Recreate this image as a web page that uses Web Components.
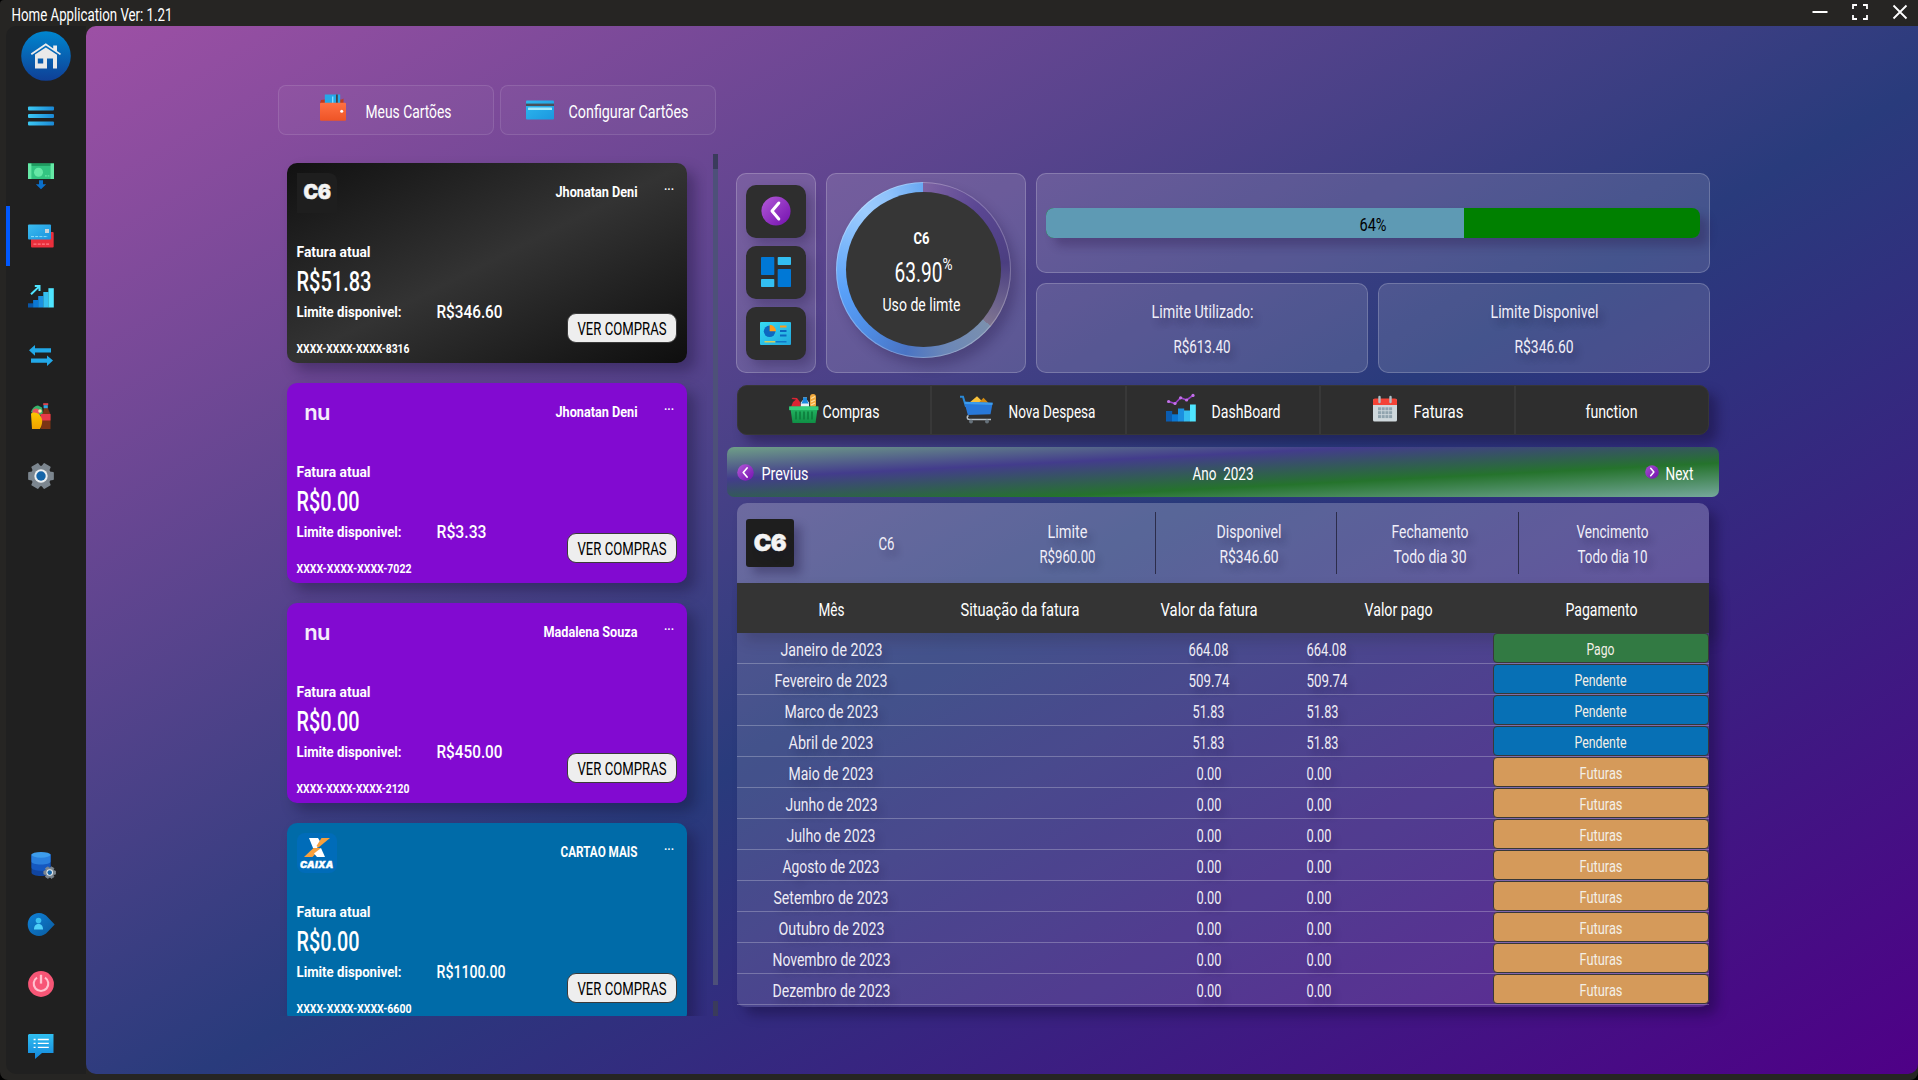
<!DOCTYPE html>
<html lang="pt-BR">
<head>
<meta charset="utf-8">
<title>Home Application</title>
<style>
html,body{margin:0;height:100%;background:#000;overflow:hidden}
body{font-family:Roboto,"Liberation Sans",sans-serif;color:#fff}
</style>
</head>
<body>
<home-app></home-app>
<script>
const make=(name,html,after)=>{
  customElements.define(name,class extends HTMLElement{
    constructor(){super();this.attachShadow({mode:'open'});}
    connectedCallback(){
      if(this.shadowRoot.childNodes.length)return;
      const t=document.createElement('template');
      t.innerHTML=typeof html==='function'?html(this):html;
      this.shadowRoot.append(t.content.cloneNode(true));
      if(after)after(this);
    }
  });
};
const a=(el,n,d='')=>el.getAttribute(n)??d;

const lg=(id,c1,c2,x2=0,y2=1)=>`<linearGradient id="${id}" x1="0" y1="0" x2="${x2}" y2="${y2}"><stop stop-color="${c1}"/><stop offset="1" stop-color="${c2}"/></linearGradient>`;
const gear=(cx,cy,r)=>{
  const p=[];
  for(let i=0;i<6;i++){
    const b=i*60;
    for(const [d,k] of [[-15,1],[15,1],[22,.77],[38,.77]]){
      const t=(b+d)*Math.PI/180;p.push((cx+Math.cos(t)*r*k).toFixed(2)+','+(cy+Math.sin(t)*r*k).toFixed(2));
    }
  }
  return `<polygon points="${p.join(' ')}" fill="#7c868f" stroke="#7c868f" stroke-width="${r*.14}" stroke-linejoin="round"/><circle cx="${cx}" cy="${cy}" r="${r*.54}" fill="#eceff1"/><circle cx="${cx}" cy="${cy}" r="${r*.38}" fill="#1565a8"/>`;
};
const icons={
home:[50,50,`<defs>${lg('g','#0086cf','#0f3f96')}</defs><circle cx="25" cy="25" r="24.8" fill="url(#g)"/><path d="M9.8 22.6 L24.8 12.2 L32.2 17.4 V14.6 H36 V20 L40 22.8 L39 24 L24.8 14.6 L10.8 24 Z" fill="#ececec"/><path fill-rule="evenodd" d="M14 23.6 L24.8 16.4 L36 23.8 V37.4 H32 V27.6 H26 V37.4 H14 Z M16.8 27.4 V32.6 H22.2 V27.4 Z" fill="#e9e9e9"/>`],
menu:[26,26,`<defs>${lg('g','#3cc9f4','#1a88d6',1,0)}</defs><g fill="url(#g)"><rect y="3.5" width="26" height="4" rx="1"/><rect y="11" width="26" height="4" rx="1"/><rect y="18.6" width="26" height="4" rx="1"/></g>`],
money:[26,26,`<rect y=".5" width="26" height="15.5" fill="#33c481"/><rect y=".5" width="26" height="2.4" fill="#1f9a5f"/><rect y=".5" width="3.4" height="15.5" fill="#66e8a6"/><rect x="22.6" y=".5" width="3.4" height="15.5" fill="#66e8a6"/><circle cx="10.5" cy="9.2" r="4.5" fill="#66e8a6"/><path d="M17 12.8h4.5" stroke="#66e8a6" stroke-width="1.2" stroke-dasharray="1.8 .8"/><path d="M11 17.2h4v4h3.2L13 26.2 7.8 21.2H11z" fill="#0a6fca"/>`],
cards:[26,26,`<defs>${lg('g','#3bbcf0','#1a93de',1,1)}</defs><rect x="3" y="9" width="22.7" height="15.6" rx="1" fill="#e92f3c"/><path d="M5.5 21.2h16.5" stroke="#ff7d85" stroke-width="1.2" stroke-dasharray="3 1.2"/><rect y="1.5" width="23" height="15" rx="1" fill="url(#g)"/><rect x="17" y="6" width="4" height="4" fill="#c8d3da"/><path d="M3 13.6h17" stroke="#8adcf9" stroke-width="1" stroke-dasharray="3 1.2"/>`],
growth:[26,26,`<g><rect y="20.3" width="5.2" height="4.2" fill="#0a56a6"/><rect x="5.1" y="17" width="5.2" height="7.5" fill="#0b78d4"/><rect x="10.2" y="13" width="5.2" height="11.5" fill="#1b90e0"/><rect x="15.3" y="9" width="5.2" height="15.5" fill="#35bff0"/><rect x="20.4" y="5.2" width="5.4" height="19.3" fill="#4fe5ff"/></g><path d="M3 11.2l8-7.6M6.8 2.9h4.7v5" fill="none" stroke="#4fe5ff" stroke-width="2"/>`],
swap:[26,26,`<g fill="#22a8e8"><path d="M1 7.3L7 2v3.2h16v4.4H7v3.2z"/><path d="M25 17.6l-6-5.2v3H3v4.4h16v3.2z"/></g>`],
food:[26,26,`<defs>${lg('g','#fcc800','#f0a000')}</defs><path d="M3 9c1-3 3-6 7-6.500l4 2 1 6-5 3z" fill="#35b36b"/><circle cx="8" cy="9" r="3.600" fill="#e8555f"/><circle cx="12" cy="8" r="1.800" fill="#f7e6b0"/><path d="M16 5l-.8 4c-1 2-1.700 4-1.700 6L13 26h9.500V12c0-2-2-4-2.500-7z" fill="#7b3415"/><rect x="15.200" y=".2" width="5" height="2" fill="#e0444f"/><rect x="15.600" y="2.200" width="4.200" height="3" fill="#35a7e0"/><path d="M12.500 11h10v6.500h-10z" fill="#e8394a"/><path d="M3 11c0-1 2-1.500 3-1.500 5 0 8.500 5 8.200 9-.2 3-1.200 5.500-2.200 7.500H4z" fill="url(#g)"/>`],
gear:[26,26,gear(13,13,12.4)],
db:[26,26,`<path d="M3.500 3.500v18c0 2 4 3.500 9.500 3.500s9.500-1.500 9.500-3.500v-18z" fill="#1045a0"/><path d="M3.500 3.500v13c0 2 4 3.200 9.500 3.200s9.500-1.200 9.500-3.200v-13z" fill="#1558c0"/><path d="M3.500 3.500v7c0 2 4 3 9.500 3s9.500-1 9.500-3v-7z" fill="#2a7fdd"/><ellipse cx="13" cy="3.800" rx="9.500" ry="2.900" fill="#3e9dec"/>${gear(21.700,21.600,6)}`],
tag:[26,26,`<defs>${lg('g','#0f82d8','#0a5a9e',1,1)}</defs><path d="M11 2C4.500 2-.3 7-.3 13.500S4.500 25 11 25c3.500 0 6.500-1.600 9-4.500l6.700-7-6.700-7C17.500 3.600 14.500 2 11 2z" fill="url(#g)"/><circle cx="10.500" cy="9.600" r="2.800" fill="#3cc0f0"/><path d="M6 18.500c0-4 2-5.500 4.500-5.500s4.500 1.500 4.500 5.500z" fill="#4fd0f8"/>`],
power:[26,26,`<circle cx="13" cy="13" r="12.900" fill="#f75676"/><path d="M9 6.600a7.300 7.300 0 1 0 8 0" fill="none" stroke="#ffc2cf" stroke-width="2.100"/><path d="M13 3.800v8.800" stroke="#ffc2cf" stroke-width="2.300"/>`],
chat:[26,26,`<defs>${lg('g','#30bff0','#1386dc')}</defs><path d="M1 3h24.500v19H14l-7 6v-6H0V4z" fill="url(#g)"/><path d="M9.800 8.500h11M9.800 12.400h11M9.800 16.300h11M5.600 8.500h2M5.600 12.400h2M5.600 16.300h2" stroke="#fff" stroke-width="1.300"/>`],
wallet:[26,27,`<defs>${lg('g','#ff7043','#ee5426')}</defs><path d="M1 6l4-.5h17l1.500-1v5H0z" fill="#bf3a1f"/><rect x="4.800" y=".5" width="15.400" height="10" fill="#26a8e8"/><rect x="12" y="2.500" width="1.400" height="8" fill="#7fdcff"/><rect x="16" y=".5" width="1.800" height="10" fill="#444"/><rect y="8.800" width="26" height="18" rx="1" fill="url(#g)"/><circle cx="21.700" cy="17.200" r="1.500" fill="#fff"/>`],
card:[28,20,`<defs>${lg('g','#2fb8ef','#1b98df',1,1)}</defs><rect y=".5" width="28" height="19" rx="1" fill="url(#g)"/><rect y="3.600" width="28" height="2.400" fill="#48505a"/><rect x="2" y="7.600" width="24" height="2.400" rx=".6" fill="#a4e8fb"/>`],
back:[30,30,`<defs>${lg('g','#b35ad8','#7310ae',1,1)}</defs><circle cx="15" cy="15" r="14.600" fill="url(#g)"/><path d="M17.800 7L11 15l6.800 8" fill="none" stroke="#fff" stroke-width="3" stroke-linejoin="round" stroke-linecap="round"/>`],
next:[30,30,`<defs>${lg('g','#a44fd0','#7310ae',1,1)}</defs><circle cx="15" cy="15" r="14.600" fill="url(#g)"/><path d="M12.200 7l6.800 8-6.800 8" fill="none" stroke="#fff" stroke-width="3.200" stroke-linejoin="round" stroke-linecap="round"/>`],
blocks:[30,30,`<rect width="13.300" height="18" rx=".8" fill="#0078d6"/><rect x="16.700" width="13.300" height="8" rx=".8" fill="#33bff2"/><rect y="22" width="13.300" height="8" rx=".8" fill="#33bff2"/><rect x="16.700" y="12" width="13.300" height="18" rx=".8" fill="#0078d6"/>`],
report:[31,23,`<defs>${lg('g','#35dcf5','#22a6dc',1,1)}</defs><rect width="31" height="23" rx="1" fill="url(#g)"/><circle cx="9.600" cy="9.300" r="5.800" fill="#0c68c0"/><path d="M9.600 9.300V2.800a6.400 6.400 0 0 1 6.400 6.500z" fill="#ff9c1a"/><path d="M20 4.500h6.500" stroke="#ff9c1a" stroke-width="2"/><path d="M20 9h6.500M20 13.500h6.500" stroke="#0c68c0" stroke-width="2"/><path d="M4.500 19.800h11" stroke="#ffd23a" stroke-width="1.200"/><path d="M15.500 19.800h11" stroke="#0c68c0" stroke-width="1.200"/>`],
basket:[30,30,`<defs>${lg('g','#26b866','#0f8f45')}</defs><path d="M2 13l2-5 3-2.500L2.500 5l1-1.200L8 4l3 4 .8 5z" fill="#dc2433"/><path d="M11.800 13V8.500L14 6V3.500h4V6l2 2.500V13z" fill="#e9f1f7"/><path d="M12.300 9.500L14 6V3.500h4V6l1.700 3.500z" fill="#1c8ae0"/><rect x="21" y="0" width="6" height="14" rx="3" fill="#f2a93c"/><path d="M22 4.500l4-2M22 8l4-2M22 11l4-2" stroke="#ffe0a0" stroke-width="1.300"/><path d="M.3 12.500h29v3.800h-1L26.500 29h-23L1.700 16.300H.3z" fill="url(#g)"/><rect x=".3" y="12.500" width="29" height="3.500" fill="#35cf7b"/><path d="M7 17.500v8M11 17.500v8M15 17.500v8M19 17.500v8M23 17.500v8" stroke="#0b7a3a" stroke-width="1.500"/>`],
cart:[33,29,`<path d="M9 8l8-6.800 7 6.800z" fill="#f9c13a"/><path d="M18.500 8l5-5.300 5 5.300z" fill="#d28a10"/><path d="M0 1.800h3l3 10" fill="none" stroke="#2a8ad8" stroke-width="2"/><path d="M4.300 6.700l28.400 1-2.200 11.500L7.800 20z" fill="#2878d8"/><path d="M4.300 6.700l28.400 1-.3 2.200-27.500-1z" fill="#3c9cec"/><path d="M8.500 20.500c-2 1-1.600 4 .8 4H31" fill="none" stroke="#b6c0c8" stroke-width="1.500"/><circle cx="11" cy="26.500" r="2" fill="#66717a"/><circle cx="27" cy="26.500" r="2" fill="#66717a"/>`],
dash:[30,28,`<path d="M2.600 7.500l6.400 2 5.600-5.700 6 2.200 6.400-4.600" fill="none" stroke="#9a3fc8" stroke-width="1.600"/><g fill="#c472ea"><circle cx="2.600" cy="7.500" r="1.600"/><circle cx="9" cy="9.500" r="1.600"/><circle cx="14.600" cy="3.800" r="1.600"/><circle cx="20.600" cy="6" r="1.600"/><circle cx="27" cy="1.400" r="1.600"/></g><rect y="17" width="6.200" height="10.500" fill="#0b5cb0"/><rect x="6" y="20.300" width="6.200" height="7.200" fill="#0b78d4"/><rect x="12" y="14.500" width="6.200" height="13" fill="#1b8fe0"/><rect x="18" y="16.500" width="6.200" height="11" fill="#35bdf0"/><rect x="24" y="10.500" width="5.800" height="17" fill="#4fe5ff"/>`],
calendar:[24,24,`<rect y="2" width="24" height="22.500" rx="1.500" fill="#cfd8dc"/><path d="M0 8V3.500Q0 1.500 2 1.500h20q2 0 2 2V8z" fill="#f44336"/><path d="M6.500 0v5M17.500 0v5" stroke="#b0bec5" stroke-width="2.400" stroke-linecap="round"/><g fill="#90a4ae">${[0,1,2].map(r=>[0,1,2,3].map(c=>`<rect x="${5+c*3.7}" y="${10.300+r*3.900}" width="3" height="3"/>`).join('')).join('')}</g>`],
mark:[40,40,`<rect width="40" height="40" rx="8" fill="#006cb9"/><path d="M12 5h9l3 5 -4 5h-4z" fill="#fff"/><path d="M24.500 5H33L21.500 14.500l-2-1.500z" fill="#f9a03c"/><path d="M16.500 15h7.500L15.500 24H7z" fill="#f9a03c"/><path d="M24 15l4 9h-8l-3-3.500z" fill="#fff"/>`],
min:[16,16,`<path d="M.5 8h15" stroke="#fff" stroke-width="2"/>`],
max:[16,16,`<path d="M1 5V1h4M11 1h4v4M15 11v4h-4M5 15H1v-4" fill="none" stroke="#fff" stroke-width="1.800"/>`],
close:[16,16,`<path d="M1.500 1.500l13 13M14.500 1.500l-13 13" stroke="#fff" stroke-width="1.800"/>`]
};
make('app-icon',el=>{
  const [w,h,s]=icons[a(el,'name')];
  const ww=a(el,'w',w),hh=a(el,'h',h);
  return `<style>:host{display:block;flex:none;width:${ww}px;height:${hh}px}svg{display:block;overflow:visible}</style><svg width="${ww}" height="${hh}" viewBox="0 0 ${w} ${h}">${s}</svg>`;
});

/* Bank logos: 40px or larger square tiles */
make('bank-logo',el=>{
  const b=a(el,'bank'),s=+a(el,'size',40);
  const base=`:host{display:flex;flex:none;width:${s}px;height:${s}px;align-items:center;justify-content:center;position:relative}`;
  if(b==='c6')return `<style>${base}:host{background:#1e1e1e;border-radius:${a(el,'tile')?'3px':'0 8px 0 0'};font:900 ${s*.49}px/1 Inter,sans-serif}span{letter-spacing:-.5px;color:#f4f4f4;-webkit-text-stroke:.5px #f4f4f4}</style><span>C6</span>`;
  if(b==='nu')return `<style>${base}span{font:600 22px/1 Inter,sans-serif;color:#f5ecfb;letter-spacing:-.8px;transform:translateY(-1px)}</style><span>nu</span>`;
  return `<style>${base}app-icon{position:absolute;inset:0}span{position:absolute;left:3px;top:27px;font:italic 900 9.500px/9px Inter,sans-serif;letter-spacing:.3px;-webkit-text-stroke:.4px #fff}</style><app-icon name="mark"></app-icon><span>CAIXA</span>`;
});

make('window-bar',`<style>
:host{display:flex;height:26px;padding:0 10px 0 12px;justify-content:space-between;align-items:flex-start;box-sizing:border-box;flex:none}
fit-text{margin-top:3px}
div{display:flex;gap:24px;margin-top:4px}
</style><fit-text w="160" s="18" lh="24">Home Application Ver: 1.21</fit-text>
<div><app-icon name="min"></app-icon><app-icon name="max"></app-icon><app-icon name="close"></app-icon></div>`);

make('side-item',`<style>
:host{display:flex;height:60px;box-sizing:border-box;border-left:4px solid transparent;padding-left:18px;align-items:center}
:host([active]){border-color:#0058ff}
:host([home]){padding-left:11px}
</style><slot></slot>`);
make('side-nav',()=>{
  const it=(n,x='')=>`<side-item ${x}><app-icon name="${n}"></app-icon></side-item>`;
  return `<style>
:host{display:flex;flex-direction:column;width:80px;flex:none;background:#202020;border-radius:10px 0 0 10px}
i{flex:1}
</style>${it('home','home')}${it('menu')}${it('money')}${it('cards','active')}${it('growth')}${it('swap')}${it('food')}${it('gear')}<i></i>${it('db')}${it('tag')}${it('power')}${it('chat')}`;
});

make('tab-button',el=>`<style>
:host{display:flex;width:216px;height:50px;box-sizing:border-box;border:1px solid rgba(255,255,255,.11);border-radius:8px;background:rgba(255,255,255,.035);padding-left:${a(el,'pl')}px;gap:${a(el,'gap')}px;align-items:center}
fit-text{margin-top:3px}
app-icon{margin-top:${a(el,'dy',-5)}px}
</style><app-icon name="${a(el,'icon')}"></app-icon><fit-text w="${a(el,'w')}" s="19" lh="24"><slot></slot></fit-text>`);

make('bank-card',el=>{
  const d=k=>a(el,k);
  return `<style>
:host{display:block;width:400px;height:200px;box-sizing:border-box;padding:10px;border-radius:10px;background:var(--card);box-shadow:8px 8px 14px rgba(15,10,40,.34);flex:none}
header{display:flex;height:40px}
.who{margin:10px 0 0 auto}
.more{font:bold 10px/8px Inter,sans-serif;width:10px;margin:9px 3px 0 27px;letter-spacing:0}
.body{display:flex;justify-content:space-between}
.left{display:flex;flex-direction:column;padding-top:29px;align-items:flex-start}
.tot{margin-top:1px}
.lim{display:flex;gap:36px;margin-top:1px}
.num{margin-top:19px}
button{all:unset;box-sizing:border-box;width:110px;height:30px;margin-top:100px;border:1px solid #3a3a3a;border-radius:9px;background:#eee;color:#000;display:flex;justify-content:center;padding:3px 1px 0 0}
</style>
<header><bank-logo bank="${d('bank')}"></bank-logo><fit-text class="who" w="${d('ww')}" s="14.500" b="700" lh="20">${d('who')}</fit-text><span class="more">...</span></header>
<div class="body"><div class="left">
<fit-text w="73" s="15" b="700" lh="20">Fatura atual</fit-text>
<fit-text class="tot" w="${d('tw')}" s="27" b="500" lh="38">${d('total')}</fit-text>
<div class="lim"><fit-text w="104" s="15" b="700" lh="20">Limite disponivel:</fit-text><fit-text w="${d('lw')}" s="19" b="500" lh="20">${d('limit')}</fit-text></div>
<fit-text class="num" w="${d('nw')}" s="13" b="700" lh="16">${d('num')}</fit-text>
</div><button><fit-text w="88" s="19" lh="24">VER COMPRAS</fit-text></button></div>`;
});

make('card-list',`<style>
:host{display:flex;width:440px;height:862px;justify-content:space-between;overflow:hidden}
.cards{display:flex;flex-direction:column;gap:20px;padding:9px 20px 0 9px;height:853px;overflow:hidden}
.bar{display:flex;flex-direction:column;width:5px;justify-content:space-between}
.bar b{height:15px;background:#3a3b5c}
.bar i{height:816px;margin-bottom:16px;background:#4d5079}
</style><div class="cards">
<bank-card style="--card:linear-gradient(to bottom right,#111,#333 50%,#0e0e0e)" bank="c6" who="Jhonatan Deni" ww="81" total="R$51.83" tw="74" limit="R$346.60" lw="65" num="XXXX-XXXX-XXXX-8316" nw="112"></bank-card>
<bank-card style="--card:#820ad1" bank="nu" who="Jhonatan Deni" ww="81" total="R$0.00" tw="62" limit="R$3.33" lw="49" num="XXXX-XXXX-XXXX-7022" nw="114"></bank-card>
<bank-card style="--card:#820ad1" bank="nu" who="Madalena Souza" ww="93" total="R$0.00" tw="62" limit="R$450.00" lw="65" num="XXXX-XXXX-XXXX-2120" nw="112"></bank-card>
<bank-card style="--card:#006ba8" bank="caixa" who="CARTAO MAIS" ww="76" total="R$0.00" tw="62" limit="R$1100.00" lw="68" num="XXXX-XXXX-XXXX-6600" nw="114"></bank-card>
</div><div class="bar"><b></b><i></i><b></b></div>`);

make('glass-panel',`<style>
:host{display:flex;box-sizing:border-box;border:1px solid rgba(255,255,255,.2);border-radius:10px;background:rgba(255,255,255,.13)}
</style><slot></slot>`);

make('square-button',el=>`<style>
:host{display:flex;width:60px;height:53px;border-radius:10px;background:#2e2e2e;align-items:center;justify-content:center;box-shadow:6px 6px 12px rgba(30,15,60,.3)}
app-icon{margin:-1px 1px 0 0}
</style><app-icon name="${a(el,'icon')}"></app-icon>`);

make('usage-ring',`<style>
:host{display:flex;width:175px;height:176px;box-sizing:border-box;border-radius:50%;border:1px solid rgba(255,255,255,.26);align-items:center;justify-content:center;background:conic-gradient(#7d63a3 0deg,#5b4793 40deg,#4b3e80 85deg,#6a608d 112deg,#7f7590 129.8deg,#7b90ae 129.9deg,#6b87b8 165deg,#4a74c4 192deg,#4f8ee6 225deg,#59a0f8 255deg,#7ab6fb 285deg,#9dccfe 315deg,#8fc2fb 335deg,#68a8f2 360deg) border-box;box-shadow:6px 8px 12px rgba(30,15,60,.28)}
div{display:flex;flex-direction:column;align-items:center;width:155px;height:155px;border-radius:50%;background:#363636;box-sizing:border-box;padding:36px 4px 0 0;margin-bottom:1px}
p{display:flex;margin:8px 0 0 3px}
.pc{margin-left:1px;margin-top:-2px}
.u{margin-top:4px}
</style><div><fit-text w="15" s="17" b="700" lh="20">C6</fit-text><p><fit-text w="47" s="27" lh="34">63.90</fit-text><fit-text class="pc" w="9" s="16" lh="22">%</fit-text></p><fit-text class="u" w="77" s="18.500" lh="22">Uso de limte</fit-text></div>`);

make('usage-bar',`<style>
:host{display:flex;width:654px;height:30px;border-radius:8px;background:#008000;overflow:hidden;align-items:stretch}
.fill{width:418px;background:#5e9ab4;display:flex;justify-content:flex-end;box-sizing:border-box;padding:5px 78px 0 0;color:#000}
</style><div class="fill"><fit-text w="26" s="18.500" lh="24">64%</fit-text></div>`);

make('limit-box',el=>`<style>
:host{display:flex;flex:1}
glass-panel{flex:1;flex-direction:column;align-items:center;padding-top:16px;gap:11px;color:#f0eef8;text-shadow:6px 6px 8px rgba(20,15,50,.3)}
</style><glass-panel><fit-text w="${a(el,'w1')}" s="18.500" lh="24">${a(el,'label')}</fit-text><fit-text w="${a(el,'w2')}" s="18.500" lh="24">${a(el,'value')}</fit-text></glass-panel>`);

make('fn-button',el=>`<style>
:host{display:flex;min-width:0;align-items:center;box-sizing:border-box;padding-left:${a(el,'pl')}px;gap:${a(el,'gap',0)}px;border-right:2px solid #383838}
:host(:last-child){border:0}
fit-text{margin-top:3px}
app-icon{margin-top:${a(el,'dy',-2)}px}
</style>${a(el,'icon')?`<app-icon name="${a(el,'icon')}"></app-icon>`:''}<fit-text w="${a(el,'w')}" s="19" lh="24"><slot></slot></fit-text>`);

make('year-bar',`<style>
:host{display:flex;height:50px;border-radius:7px;background:linear-gradient(to bottom right,#6fa087 0,#433c8c 32%,#25732c 66%,#76a89c 100%);align-items:center;justify-content:space-between;padding:0 26px 0 10px;box-sizing:border-box;flex:none}
span{display:flex;align-items:center}
fit-text{margin-top:3px}
</style><span style="gap:8px;width:100px"><app-icon name="back" w="17" h="17"></app-icon><fit-text w="46" s="19" lh="24">Previus</fit-text></span>
<fit-text w="60" s="18.500" lh="24">Ano&nbsp; 2023</fit-text>
<span style="gap:7px;width:84px;justify-content:flex-end"><app-icon name="next" w="14" h="14"></app-icon><fit-text w="27" s="18.500" lh="24">Next</fit-text></span>`);

make('info-cell',el=>`<style>
:host{display:flex;flex-direction:column;align-items:center;justify-content:center;gap:1px;width:175.500px;height:62px;box-sizing:border-box;padding-top:2px}
:host([line]){border-right:1px solid #2c2c4a}
</style>${a(el,'label')?`<fit-text w="${a(el,'w1')}" s="19" lh="24">${a(el,'label')}</fit-text>`:''}<fit-text w="${a(el,'w2')}" s="19" lh="24">${a(el,'value')}</fit-text>`);

make('invoice-row',el=>{
  const s=a(el,'state'),c={Pago:['#327a43',27],Pendente:['#0770b5',51],Futuras:['#d59a5a',42]}[s];
  return `<style>
:host{display:grid;grid-template-columns:188.700px 188.700px 188.700px 190px 1fr;height:31px;box-sizing:border-box;border-bottom:1px solid rgba(255,255,255,.25);color:#eeecf5;text-shadow:6px 6px 8px rgba(20,15,50,.25)}
div{display:flex;justify-content:center;padding-top:5px}
.paid{justify-content:flex-start;padding-left:4px}
button{all:unset;box-sizing:border-box;display:flex;justify-content:center;height:30px;border:1px solid #383838;border-radius:4px;padding:4px 1px 0 0;background:${c[0]};color:#f3efe6;text-shadow:none}
</style><div><fit-text w="${a(el,'mw')}" s="18.500" lh="24">${a(el,'month')}</fit-text></div><div></div><div><fit-text w="${a(el,'vw')}" s="18.500" lh="24">${a(el,'value')}</fit-text></div><div class="paid"><fit-text w="${a(el,'vw')}" s="18.500" lh="24">${a(el,'value')}</fit-text></div><button><fit-text w="${c[1]}" s="16.500" lh="24">${s}</fit-text></button>`;
});

make('invoice-table',()=>{
  const rows=[['Janeiro',101,'664.08',39,'Pago'],['Fevereiro',112,'509.74',40,'Pendente'],['Marco',93,'51.83',31,'Pendente'],['Abril',84,'51.83',31,'Pendente'],['Maio',84,'0.00',24],['Junho',91,'0.00',24],['Julho',88,'0.00',24],['Agosto',96,'0.00',24],['Setembro',114,'0.00',24],['Outubro',105,'0.00',24],['Novembro',117,'0.00',24],['Dezembro',117,'0.00',24]];
  return `<style>
:host{display:flex;flex-direction:column;border-radius:10px;box-shadow:8px 8px 12px rgba(15,5,45,.36);width:972px}
.top{display:flex;height:80px;border-radius:10px 10px 0 0;background:rgba(255,255,255,.22);box-sizing:border-box;padding-left:9px;align-items:center;color:#f0eef8;text-shadow:6px 6px 8px rgba(20,15,50,.25)}
.top bank-logo{margin-top:-1px;box-shadow:7px 7px 10px rgba(20,10,50,.3)}
.info{display:flex;gap:6px;margin-left:4.500px}
.head{display:grid;grid-template-columns:188.700px 188.700px 188.700px 190px 1fr;height:50px;background:#343434;box-shadow:8px 8px 12px rgba(20,15,50,.3);justify-items:center;padding-top:15px;box-sizing:border-box}
.rows{background:rgba(255,255,255,.12);border-radius:0 0 8px 8px;padding-bottom:2px}
</style>
<div class="top"><bank-logo bank="c6" size="48" tile="1"></bank-logo><div class="info">
<info-cell value="C6" w2="15"></info-cell>
<info-cell line label="Limite" w1="39" value="R$960.00" w2="55"></info-cell>
<info-cell line label="Disponivel" w1="64" value="R$346.60" w2="58"></info-cell>
<info-cell line label="Fechamento" w1="76" value="Todo dia 30" w2="72"></info-cell>
<info-cell label="Vencimento" w1="71" value="Todo dia 10" w2="69"></info-cell></div></div>
<div class="head"><fit-text w="25" s="18.500" lh="24">Mês</fit-text><fit-text w="118" s="18.500" lh="24">Situação da fatura</fit-text><fit-text w="96" s="18.500" lh="24">Valor da fatura</fit-text><fit-text w="67" s="18.500" lh="24">Valor pago</fit-text><fit-text w="71" s="18.500" lh="24">Pagamento</fit-text></div>
<div class="rows">${rows.map(r=>`<invoice-row month="${r[0]} de 2023" mw="${r[1]}" value="${r[2]}" vw="${r[3]}" state="${r[4]||'Futuras'}"></invoice-row>`).join('')}</div>`;
});

make('card-dashboard',`<style>
:host{display:flex;flex-direction:column;width:992px}
.top{display:flex;gap:10px;height:200px;margin:0 9px}
.nav{width:80px;flex-direction:column;align-items:center;padding-top:11px;gap:8px}
.ring{width:200px;padding:8px 0 0 9px;align-items:flex-start}
.stats{flex:1;display:flex;flex-direction:column;gap:10px}
.bar{height:100px;padding:34px 0 0 9px;align-items:flex-start}
.bar div{border-radius:8px;box-shadow:8px 8px 10px rgba(40,20,70,.3)}
.lim{display:flex;gap:10px;height:90px}
.fn{display:grid;grid-template-columns:194px 195px 194px 195px 1fr;height:50px;margin:12px 10px;box-sizing:border-box;border:1px solid #363636;border-radius:10px;background:#2e2e2e;box-shadow:8px 8px 12px rgba(20,10,50,.42)}
invoice-table{margin:6px 0 0 10px}
</style>
<div class="top"><glass-panel class="nav"><square-button icon="back"></square-button><square-button icon="blocks"></square-button><square-button icon="report"></square-button></glass-panel>
<glass-panel class="ring"><usage-ring></usage-ring></glass-panel>
<div class="stats"><glass-panel class="bar"><div><usage-bar></usage-bar></div></glass-panel>
<div class="lim"><limit-box label="Limite Utilizado:" w1="101" value="R$613.40" w2="56"></limit-box><limit-box label="Limite Disponivel" w1="107" value="R$346.60" w2="58"></limit-box></div></div></div>
<div class="fn"><fn-button icon="basket" pl="51" gap="4" w="56">Compras</fn-button><fn-button icon="cart" pl="28" gap="16" w="86">Nova Despesa</fn-button><fn-button icon="dash" pl="39" gap="16" w="68" dy="-4">DashBoard</fn-button><fn-button icon="calendar" pl="52" gap="17" w="49">Faturas</fn-button><fn-button pl="70" w="51">function</fn-button></div>
<year-bar></year-bar>
<invoice-table></invoice-table>`);

make('home-app',`<style>
:host{display:flex;flex-direction:column;width:1918px;height:1080px;background:#262523;border-radius:4px 0 8px 8px;overflow:hidden}
.row{display:flex;height:1048px;padding-left:6px}
main{flex:1;display:flex;flex-direction:column;border-radius:10px 0 10px 10px;background:linear-gradient(to bottom right,#9d50a5 0,#293b7c 53%,#4f0087 100%);padding:59px 0 0 192px;box-sizing:border-box}
nav{display:flex;gap:6px}
.cols{display:flex;gap:9px;margin-top:19px;align-items:flex-start}
card-dashboard{margin-top:19px}
</style><window-bar></window-bar><div class="row"><side-nav></side-nav><main>
<nav><tab-button icon="wallet" pl="41" gap="20" w="85">Meus Cartões</tab-button><tab-button icon="card" pl="25" gap="15" w="119" dy="-1">Configurar Cartões</tab-button></nav>
<div class="cols"><card-list></card-list><card-dashboard></card-dashboard></div>
</main></div>`);

/* Condensed label: squeezes its text horizontally to the width given in w */
customElements.define('fit-text',class extends HTMLElement{
  constructor(){
    super();
    this.attachShadow({mode:'open'});
  }
  connectedCallback(){
    const w=+a(this,'w'),s=a(this,'s'),lh=a(this,'lh'),b=a(this,'b','400');
    this.shadowRoot.innerHTML=`<style>:host{display:block;flex:none;width:${w}px;height:${lh}px;font-size:${+s}px;font-weight:${b};line-height:${lh}px}span{display:inline-block;white-space:nowrap;transform-origin:0 50%}</style><span><slot></slot></span>`;
    this.fit();
    addEventListener('load',()=>this.fit());
  }
  fit(){
    const sp=this.shadowRoot.querySelector('span');
    sp.style.transform='none';
    const n=sp.getBoundingClientRect().width;
    if(n)sp.style.transform=`translateX(-.5px) scaleX(${(+a(this,'w')+1)/n})`;
  }
});
</script>
</body>
</html>
